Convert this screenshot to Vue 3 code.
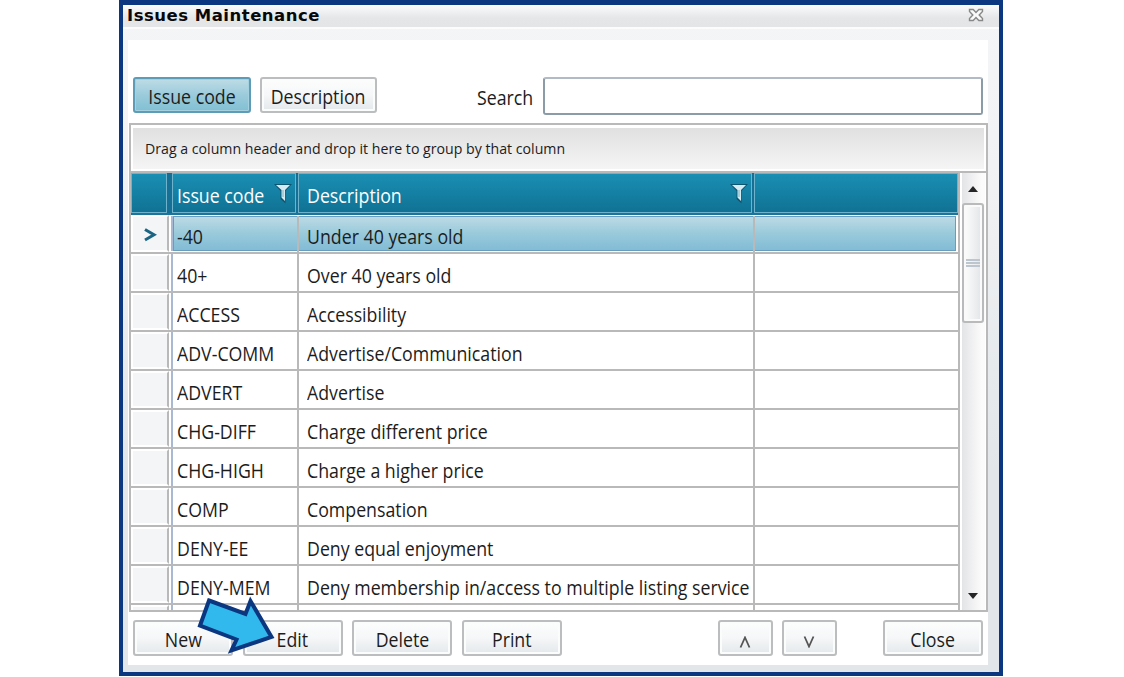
<template>
  <div class="page">
    <section class="window">
      <header class="title-bar">
        <h1 class="title">Issues Maintenance</h1>
        <svg class="close-icon" viewBox="0 0 16 14" width="16" height="14">
          <path d="M1.5 1.5H5.2L8 4.4L10.800 1.500H14.500V3.500L11.200 7L14.500 10.500V12.500H10.800L8 9.600L5.200 12.500H1.500V10.500L4.800 7L1.500 3.500Z" />
        </svg>
      </header>

      <main class="panel">
        <!-- Search field selector -->
        <div class="toolbar">
          <button class="btn btn-code is-active"><span class="text">Issue code</span></button>
          <button class="btn btn-desc"><span class="text">Description</span></button>
          <label class="search-label" for="search"><span class="text">Search</span></label>
          <input id="search" v-model="search" class="search" type="text" />
        </div>

        <div class="grid">
          <div class="group-panel">
            <span class="group-text">Drag a column header and drop it here to group by that column</span>
          </div>

          <div class="grid-body">
            <div class="table">
              <div class="header-row">
                <div class="head head-marker"></div>
                <div class="head head-code">
                  <span class="text">Issue code</span>
                  <svg class="funnel" viewBox="0 0 18 21" width="18" height="21">
                    <path class="funnel-shadow" d="M0 1H18L11.500 8V20.500L6.500 16V8Z" />
                    <path class="funnel-shape" d="M2 2H16L11 7V18L7.500 14.500V7Z" />
                    <path class="funnel-core" d="M9 7V14" />
                  </svg>
                </div>
                <div class="head head-desc">
                  <span class="text">Description</span>
                  <svg class="funnel" viewBox="0 0 18 21" width="18" height="21">
                    <path class="funnel-shadow" d="M0 1H18L11.500 8V20.500L6.500 16V8Z" />
                    <path class="funnel-shape" d="M2 2H16L11 7V18L7.500 14.500V7Z" />
                    <path class="funnel-core" d="M9 7V14" />
                  </svg>
                </div>
                <div class="head head-empty"></div>
              </div>

              <div
                v-for="(issue, index) in issues"
                :key="issue.code"
                class="row"
                :class="{ 'is-selected': selected === index }"
                @click="selected = index"
              >
                <div class="marker">
                  <svg v-if="selected === index" viewBox="0 0 14 14" width="14" height="14">
                    <path d="M2 1.500L11 6.800L2 12" />
                  </svg>
                </div>
                <div class="cells">
                  <div class="cell"><span class="text">{{ issue.code }}</span></div>
                  <div class="cell"><span class="text">{{ issue.description }}</span></div>
                  <div class="cell"></div>
                </div>
              </div>

              <!-- Next row, cut off by the viewport -->
              <div class="row">
                <div class="marker"></div>
                <div class="cells">
                  <div class="cell"></div>
                  <div class="cell"></div>
                  <div class="cell"></div>
                </div>
              </div>
            </div>

            <div class="scrollbar">
              <svg class="arrow" viewBox="0 0 10 6" width="10" height="6"><path d="M0 6L5 0L10 6Z" /></svg>
              <div class="thumb"><i></i><i></i><i></i></div>
              <svg class="arrow arrow-down" viewBox="0 0 10 6" width="10" height="6"><path d="M0 0H10L5 6Z" /></svg>
            </div>
          </div>
        </div>

        <footer class="actions">
          <button class="btn"><span class="text">New</span></button>
          <button class="btn"><span class="text">Edit</span></button>
          <button class="btn"><span class="text">Delete</span></button>
          <button class="btn"><span class="text">Print</span></button>
          <div class="movers">
            <button class="btn btn-small" @click="move(-1)">
              <svg viewBox="0 0 12 12" width="12" height="12"><path d="M1.500 11.500L6 1.500L10.500 11.500" /></svg>
            </button>
            <button class="btn btn-small" @click="move(1)">
              <svg viewBox="0 0 12 12" width="12" height="12"><path d="M1.500 0.500L6 10.500L10.500 0.500" /></svg>
            </button>
          </div>
          <button class="btn"><span class="text">Close</span></button>
        </footer>
      </main>

      <!-- Pointer to the Edit button -->
      <svg class="pointer" viewBox="0 0 80 64" width="80" height="64">
        <path d="M14 6.500L50.500 20L55.500 7L76.500 43L36.500 56.500L41.500 45.500L5 31.500Z" />
      </svg>
    </section>
  </div>
</template>

<script setup>
import { ref } from 'vue'

const search = ref('')
const selected = ref(0)

const issues = ref([
  { code: '-40', description: 'Under 40 years old' },
  { code: '40+', description: 'Over 40 years old' },
  { code: 'ACCESS', description: 'Accessibility' },
  { code: 'ADV-COMM', description: 'Advertise/Communication' },
  { code: 'ADVERT', description: 'Advertise' },
  { code: 'CHG-DIFF', description: 'Charge different price' },
  { code: 'CHG-HIGH', description: 'Charge a higher price' },
  { code: 'COMP', description: 'Compensation' },
  { code: 'DENY-EE', description: 'Deny equal enjoyment' },
  { code: 'DENY-MEM', description: 'Deny membership in/access to multiple listing service' }
])

const move = (step) => {
  const next = selected.value + step
  if (next >= 0 && next < issues.value.length) {
    selected.value = next
  }
}
</script>

<style>
body {
  background: #ffffff;
  overflow: hidden;
}
</style>

<style scoped>
.page {
  height: 677px;
  padding-left: 119px;
  box-sizing: border-box;
  font-family: 'Open Sans', 'Noto Sans', sans-serif;
  font-size: 19.5px;
  color: #1c1c1c;
}

.window {
  position: relative;
  width: 884px;
  height: 676px;
  box-sizing: border-box;
  border: 4px solid #0b3680;
  border-top-width: 5px;
  background: linear-gradient(#f4f5f6, #f2f3f4 20%, #e2e6e9 70%);
  overflow: hidden;
}

.title-bar {
  height: 22px;
  display: flex;
  justify-content: space-between;
  box-sizing: content-box;
  border-bottom: 2px solid #fcfcfd;
  padding: 0 15px 0 4px;
  background: linear-gradient(#fbfbfc, #e4e6e8 60%, #e3e5e7);
}

.title {
  margin: 0;
  font-family: 'DejaVu Sans', sans-serif;
  font-size: 16.5px;
  letter-spacing: 0.5px;
  line-height: 21px;
  font-weight: bold;
  color: #080808;
  white-space: nowrap;
}

.close-icon {
  margin-top: 3px;
}

.close-icon path {
  fill: #fafafa;
  stroke: #888888;
  stroke-width: 1.4;
}

.panel {
  margin: 11px 11px 0 5px;
  height: 625px;
  background: #ffffff;
}

/* Labels are slightly condensed */
.text {
  display: inline-block;
  white-space: nowrap;
  transform: scaleX(0.91);
  transform-origin: 0 50%;
}

.btn .text {
  margin-top: 3px;
  transform-origin: 50% 50%;
}

.btn {
  width: 100px;
  height: 36px;
  padding: 0;
  display: flex;
  align-items: center;
  justify-content: center;
  box-sizing: border-box;
  font: inherit;
  color: inherit;
  border: 2px solid #bcbdbf;
  border-radius: 3px;
  background: linear-gradient(#fdfdfd, #f5f7f8 50%, #e3e8eb);
  box-shadow: inset 0 0 0 2px #fbfcfc;
}

.btn.is-active {
  border-color: #5d9cb6;
  background: linear-gradient(#bedce6, #9bcbdb 50%, #81bfd3);
  box-shadow: inset 0 0 0 1px #a5d0df;
}

/* Toolbar */
.toolbar {
  height: 83px;
  display: flex;
  box-sizing: border-box;
  padding: 37px 5px 0 5px;
}

.btn-code {
  width: 118px;
}

.btn-desc {
  width: 117px;
  margin-left: 9px;
}

.search-label {
  width: 66px;
  margin-left: 100px;
  line-height: 41px;
}

.search {
  flex: 1;
  min-width: 0;
  height: 38px;
  box-sizing: border-box;
  border: 2px solid #8b9ba8;
  border-top-color: #b2bac3;
  border-radius: 3px;
  outline: none;
  font: inherit;
  background: #ffffff;
}

/* Grid */
.grid {
  margin-left: 1px;
  height: 489px;
  box-sizing: border-box;
  border: 2px solid #b9b9b9;
  display: flex;
  flex-direction: column;
}

.group-panel {
  height: 46px;
  box-sizing: border-box;
  flex-shrink: 0;
  border: 2px solid #ffffff;
  border-top-width: 3px;
  padding-left: 12px;
  background: linear-gradient(#e0e0e1, #f5f5f5);
}

.group-text {
  display: inline-block;
  font-size: 14.5px;
  line-height: 41px;
  white-space: nowrap;
  transform: scaleX(0.976);
  transform-origin: 0 50%;
}

.grid-body {
  flex: 1;
  min-height: 0;
  display: flex;
  border-top: 2px solid #b9b9b9;
}

.table {
  width: 827px;
  border-right: 2px solid #b9b9b9;
  overflow: hidden;
}

.header-row {
  height: 42px;
  box-sizing: border-box;
  display: grid;
  grid-template-columns: 37px 4px 126px 456px 1fr;
  border-bottom: 2px solid #1a749b;
  color: #ffffff;
  background: #166f95;
}

.head {
  position: relative;
  display: flex;
  align-items: center;
  justify-content: space-between;
  box-sizing: border-box;
  border: 1px solid #6eb2cc;
  background: linear-gradient(#198fb3, #107294);
}

.head .text {
  margin-left: 4px;
  margin-top: 4px;
}

.head-code {
  grid-column: 3;
  margin-right: 2px;
}

.head-desc {
  margin-right: 2px;
}

.head-desc .text {
  margin-left: 8px;
}

.head-marker {
  margin-right: 1px;
}

.funnel {
  flex-shrink: 0;
  margin: 1px 3px 0 -12px;
}

.funnel-shadow {
  fill: #0c5672;
}

.funnel-shape {
  fill: #d5ebf3;
}

.funnel-core {
  stroke: #7db2c5;
  stroke-width: 1;
}

.row {
  height: 39px;
  box-sizing: border-box;
  display: flex;
  border-bottom: 2px solid #b9b9b9;
  background: #ffffff;
}

.marker {
  width: 38px;
  box-sizing: border-box;
  flex-shrink: 0;
  display: flex;
  align-items: center;
  justify-content: center;
  border: 2px solid #ffffff;
  border-right-color: #b9b9b9;
  background: #f4f5f7;
}

.marker svg {
  margin-top: 3px;
}

.marker path {
  fill: none;
  stroke: #1a6584;
  stroke-width: 3;
}

.cells {
  flex: 1;
  margin-left: 2px;
  display: grid;
  grid-template-columns: 126px 456px 1fr;
  border-left: 2px solid #a9b9d4;
}

.cell {
  padding: 4px 0 0 4px;
  line-height: 35px;
  height: 37px;
  box-sizing: border-box;
  border-right: 2px solid #b9b9b9;
  min-width: 0;
}

.cell:nth-child(2) {
  padding-left: 8px;
}

.cell:last-child {
  border-right: none;
}

.row.is-selected .cells {
  height: 35px;
  margin-top: 1px;
  margin-right: 2px;
  box-shadow: inset 0 0 0 1px #699dbc;
  background: linear-gradient(#bedbe5, #99cadb 50%, #81bbd5);
}

.row.is-selected .cell {
  padding-top: 3px;
}

/* Scrollbar */
.scrollbar {
  flex: 1;
  margin: 0 1px 0 2px;
  display: flex;
  flex-direction: column;
  align-items: flex-start;
  background: linear-gradient(90deg, #e3e4e6, #fbfbfb 85%);
}

.arrow {
  flex-shrink: 0;
  margin: 13px 0 11px 6px;
  fill: #252525;
}

.arrow-down {
  margin-top: auto;
}

.thumb {
  width: 22px;
  height: 120px;
  box-sizing: border-box;
  display: flex;
  flex-direction: column;
  align-items: center;
  justify-content: center;
  gap: 1px;
  border: 2px solid #b9babc;
  border-radius: 3px;
  background: linear-gradient(90deg, #fdfdfd, #f0f1f2 50%, #e1e4e7);
  box-shadow: inset 0 0 0 2px #fafafa;
}

.thumb i {
  width: 14px;
  height: 2px;
  background: #bdc5cf;
}

/* Footer buttons */
.actions {
  display: flex;
  gap: 9.500px;
  padding: 8px 5px 0 5px;
}

.movers {
  display: flex;
  gap: 9px;
  margin-left: auto;
  margin-right: 37px;
}

.btn-small {
  width: 55px;
}

.btn-small svg {
  margin-top: 8px;
}

.btn-small path {
  fill: none;
  stroke: #555555;
  stroke-width: 1.8;
}

.pointer {
  position: absolute;
  left: 72px;
  top: 589px;
}

.pointer path {
  fill: #31b8ec;
  stroke: #0b3680;
  stroke-width: 4;
}
</style>
